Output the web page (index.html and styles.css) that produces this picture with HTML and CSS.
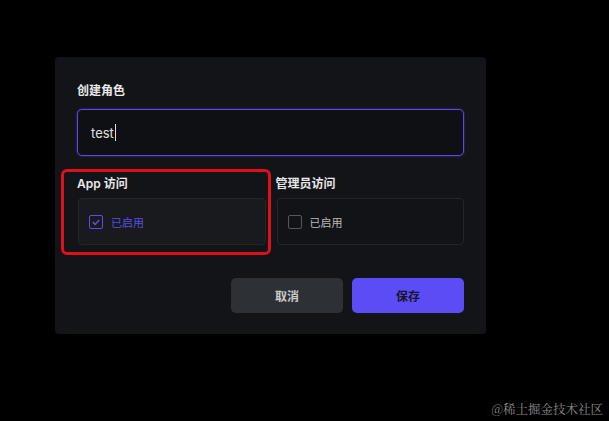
FILE: index.html
```html
<!DOCTYPE html>
<html lang="zh-CN">
<head>
    <meta charset="UTF-8">
    <meta name="viewport" content="width=device-width, initial-scale=1.0">
    <title>创建角色</title>
    <link rel="stylesheet" href="styles.css">
</head>
<body>
    <div class="dialog">
        <label class="label" for="role">创建角色</label>
        <div class="input"><span>test</span><span class="caret"></span></div>

        <div class="perms">
            <div class="perm">
                <div class="label">App 访问</div>
                <div class="option checked">
                    <span class="box">
                        <svg width="14" height="14" viewBox="0 0 14 14"><path d="M3.3 7.2 L6 9.8 L10.8 4.6" fill="none" stroke="#5b4fe6" stroke-width="1.8"/></svg>
                    </span>
                    <span>已启用</span>
                </div>
                <div class="highlight"></div>
            </div>
            <div class="perm">
                <div class="label">管理员访问</div>
                <div class="option">
                    <span class="box"></span>
                    <span>已启用</span>
                </div>
            </div>
        </div>

        <div class="actions">
            <button class="cancel">取消</button>
            <button class="save">保存</button>
        </div>
    </div>

    <div class="mark">@稀土掘金技术社区</div>
</body>
</html>
```

FILE: styles.css
```css
body {
    margin: 0;
    width: 609px;
    height: 421px;
    background: #000;
    font-family: Inter, "Noto Sans CJK SC", sans-serif;
    position: relative;
    overflow: hidden;
}

.dialog {
    position: absolute;
    left: 55px;
    top: 57px;
    width: 387px;
    padding: 26px 22px 21px 22px;
    background: #131418;
    border-radius: 4px;
    display: flex;
    flex-direction: column;
}

.label {
    display: block;
    color: #e8e8ea;
    font-size: 12px;
    font-weight: 600;
    line-height: 16px;
}

.input {
    margin-top: 10px;
    height: 45px;
    border: 1px solid #5a4aec;
    border-radius: 5px;
    background: #0f1013;
    box-shadow: 0 0 3px rgba(90, 76, 230, 0.45);
    display: flex;
    align-items: center;
    padding-left: 13px;
    color: #e0e0e2;
    font-size: 13px;
}

.caret {
    width: 1px;
    height: 17px;
    background: #e0e0e2;
    margin-left: 1px;
}

.perms {
    margin-top: 20px;
    display: grid;
    grid-template-columns: 1fr 1fr;
    gap: 10px;
}

.perm {
    position: relative;
    padding-left: 1px;
}

.perm .label {
    margin-left: -1px;
}

.option {
    margin-top: 6px;
    height: 45px;
    border: 1px solid #24262b;
    border-radius: 4px;
    background: #121317;
    display: flex;
    align-items: center;
    padding-left: 10px;
    gap: 8px;
    color: #b9babd;
    font-size: 11px;
}

.option.checked {
    background: #181a1e;
    color: #5b4fe0;
}

.box {
    width: 12px;
    height: 12px;
    border: 1.5px solid #55575c;
    border-radius: 2px;
    display: flex;
    align-items: center;
    justify-content: center;
}

.checked .box {
    border-color: #5b4fe6;
}

.highlight {
    position: absolute;
    left: -16px;
    top: -7px;
    width: 204px;
    height: 80px;
    border: 3px solid #e0101a;
    border-radius: 6px;
}

.actions {
    margin-top: 33px;
    display: flex;
    justify-content: flex-end;
    gap: 9px;
}

button {
    width: 112px;
    height: 35px;
    border: none;
    border-radius: 5px;
    font-family: Inter, "Noto Sans CJK SC", sans-serif;
    font-size: 12px;
    font-weight: 600;
}

.cancel {
    background: #2d3034;
    color: #c9cacc;
}

.save {
    background: #5b4cf6;
    color: #16152a;
}

.mark {
    position: absolute;
    right: 6px;
    top: 400px;
    color: #8a8a8a;
    font-family: "Noto Serif CJK SC", "Noto Sans CJK SC", serif;
    font-size: 12.5px;
}
```
